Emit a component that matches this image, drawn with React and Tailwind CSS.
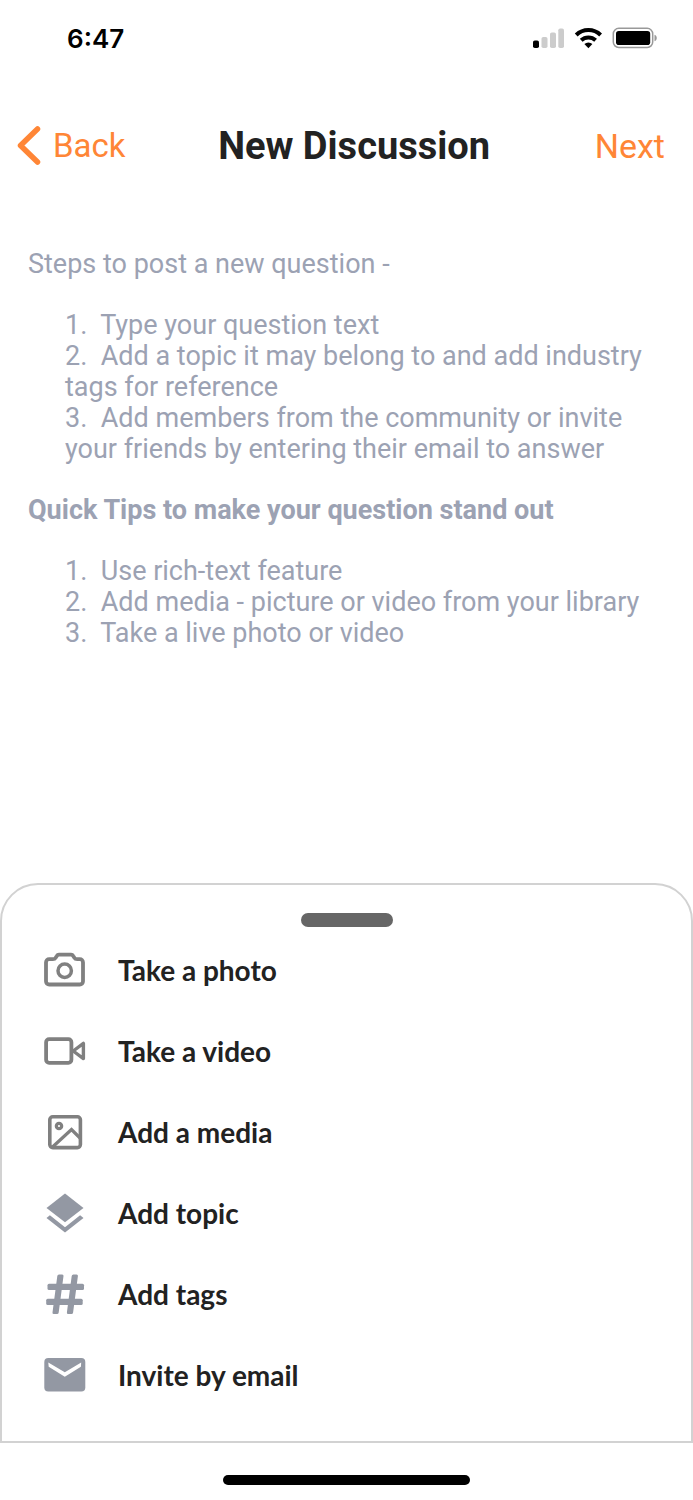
const steps = [
  'Type your question text',
  'Add a topic it may belong to and add industry tags for reference',
  'Add members from the community or invite your friends by entering their email to answer',
]

const tips = [
  'Use rich-text feature',
  'Add media - picture or video from your library',
  'Take a live photo or video',
]

const actions = [
  { label: 'Take a photo', Icon: CameraIcon },
  { label: 'Take a video', Icon: VideoIcon },
  { label: 'Add a media', Icon: MediaIcon },
  { label: 'Add topic', Icon: TopicIcon },
  { label: 'Add tags', Icon: TagsIcon },
  { label: 'Invite by email', Icon: MailIcon },
]

function CameraIcon() {
  return (
    <svg width="42" height="42" viewBox="0 0 42 42" fill="none" stroke="#808080" strokeWidth="3.8" strokeLinejoin="round" aria-hidden="true">
      <path d="M5.200 10.200h3.600c1.600 0 2.300-.4 3-1.600l1-1.600c.5-.9 1.100-1.300 2.100-1.300h12.200c1 0 1.600.4 2.100 1.300l1 1.600c.7 1.200 1.400 1.600 3 1.600h2.600a3.200 3.200 0 0 1 3.200 3.200v18.900a3.200 3.200 0 0 1-3.200 3.200H5.200a3.200 3.200 0 0 1-3.200-3.200V13.400a3.200 3.200 0 0 1 3.200-3.200z" />
      <circle cx="20.700" cy="21.700" r="6.700" strokeWidth="3.500" />
    </svg>
  )
}

function VideoIcon() {
  return (
    <svg width="42" height="42" viewBox="0 0 42 42" fill="none" stroke="#808080" strokeWidth="3.8" strokeLinejoin="round" aria-hidden="true">
      <rect x="2.100" y="9.200" width="25.300" height="23.600" rx="3" />
      <path d="M29.200 21L39.400 13.400v15.200z" strokeWidth="3.400" />
    </svg>
  )
}

function MediaIcon() {
  return (
    <svg width="42" height="42" viewBox="0 0 42 42" fill="none" stroke="#808080" strokeWidth="3.6" strokeLinejoin="round" aria-hidden="true">
      <rect x="5.800" y="5.800" width="30.600" height="30.800" rx="3" />
      <circle cx="15" cy="15" r="2.700" strokeWidth="3.200" />
      <path d="M8.500 36l19-17.500 9 9" strokeWidth="3.200" strokeLinejoin="miter" />
    </svg>
  )
}

function TopicIcon() {
  return (
    <svg width="42" height="42" viewBox="0 0 42 42" fill="#9398a3" aria-hidden="true">
      <path d="M21 1.500L39.500 16 21 30.200 2.500 16z" />
      <path d="M2.500 26l3.400-2.700L21 35.200l15.100-11.900 3.400 2.700L21 40.600z" />
    </svg>
  )
}

function TagsIcon() {
  return (
    <svg width="42" height="42" viewBox="0 0 42 42" fill="#9398a3" aria-hidden="true">
      <g transform="translate(5.400 0) skewX(-7.500)">
        <rect x="8.300" y="1.500" width="6.200" height="39.500" rx="1.500" />
        <rect x="22.700" y="1.500" width="6.200" height="39.500" rx="1.500" />
      </g>
      <rect x="3.500" y="10.700" width="36.500" height="6.200" rx="1.500" />
      <rect x="2.200" y="25.800" width="36.500" height="6.200" rx="1.500" />
    </svg>
  )
}

function MailIcon() {
  return (
    <svg width="42" height="42" viewBox="0 0 42 42" aria-hidden="true">
      <rect x="0.300" y="4" width="41" height="33.500" rx="4" fill="#9398a3" />
      <path d="M4.300 8.500L20.800 18.300 37.200 8.500l-.3 4.300L20.800 22.700 4.700 12.800z" fill="#fff" />
    </svg>
  )
}

function StatusBar() {
  return (
    <div className="flex h-19 items-center justify-between pr-9 pl-[67px]">
      <span className="font-[Inter,sans-serif] text-[26px] font-semibold text-black">6:47</span>
      <div className="flex items-center gap-[10px]">
        {/* Signal */}
        <svg width="32" height="22" viewBox="0 0 32 22" aria-hidden="true">
          <rect x="1" y="13.500" width="6" height="7.500" rx="1.800" fill="#000" />
          <rect x="9.500" y="10" width="6" height="11" rx="1.800" fill="#ccc" />
          <rect x="18" y="5.500" width="6" height="15.500" rx="1.800" fill="#ccc" />
          <rect x="26.300" y="1.500" width="5.700" height="19.500" rx="1.800" fill="#ccc" />
        </svg>
        {/* Wifi */}
        <svg width="28" height="22" viewBox="0 0 28 22" fill="none" stroke="#000" strokeWidth="4" aria-hidden="true">
          <path d="M2.200 8a17.500 17.500 0 0 1 24.400 0" />
          <path d="M7.200 13.300a10.500 10.500 0 0 1 14.400 0" />
          <path d="M14.400 21.200l-4-4.200a5.800 5.800 0 0 1 8 0z" fill="#000" stroke="none" />
        </svg>
        {/* Battery */}
        <svg width="45" height="22" viewBox="0 0 45 22" aria-hidden="true">
          <rect x="1.300" y="1.300" width="39.400" height="19.200" rx="5.500" fill="none" stroke="#999" strokeWidth="1.500" />
          <rect x="4" y="4" width="34.200" height="14" rx="2.800" fill="#000" />
          <path d="M42.500 7.800c3 1 3 5.400 0 6.400z" fill="#999" />
        </svg>
      </div>
    </div>
  )
}

function NumberedList({ items }) {
  return (
    <ol className="mt-[30px] pl-[37px]">
      {items.map((item, i) => (
        <li key={item}>{`${i + 1}.\u00a0 ${item}`}</li>
      ))}
    </ol>
  )
}

export default function App() {
  return (
    <div className="flex min-h-screen flex-col bg-white font-[Roboto,sans-serif]">
      <StatusBar />

      <header className="mt-10 flex items-center justify-between pr-7 pl-4 leading-[60px]">
        <button className="flex items-center gap-3 text-[33px] text-[#ff8636]">
          <svg width="25" height="40" viewBox="0 0 25 40" fill="none" stroke="currentColor" strokeWidth="5.500" strokeLinecap="round" strokeLinejoin="round" aria-hidden="true">
            <path d="M21.500 3L4.500 19.500l17 16.500" />
          </svg>
          Back
        </button>
        <h1 className="mr-3 text-[38px] font-bold text-[#222]">New Discussion</h1>
        <button className="text-[34px] text-[#ff8636]">Next</button>
      </header>

      <main className="mt-[73px] px-7 text-[27px] leading-[31px] text-[#9ca2b3]">
        <p>Steps to post a new question -</p>
        <NumberedList items={steps} />
        <h2 className="mt-[30px] font-bold">Quick Tips to make your question stand out</h2>
        <NumberedList items={tips} />
      </main>

      {/* Bottom sheet */}
      <section className="mt-auto rounded-t-[38px] border-2 border-[#d2d2d2] pt-7 pb-[26px]">
        <div className="mx-auto h-[14px] w-[92px] rounded-full bg-[#666]" />
        <ul className="mt-[2px]">
          {actions.map(({ label, Icon }) => (
            <li key={label}>
              <button className="flex h-[81px] w-full items-center gap-8 pl-[42px] text-left font-[Lato,sans-serif] text-[28px] font-bold text-[#222]">
                <Icon />
                {label}
              </button>
            </li>
          ))}
        </ul>
      </section>

      {/* Home indicator */}
      <div className="flex h-[57px] justify-center pt-8">
        <div className="h-[10px] w-[247px] rounded-full bg-black" />
      </div>
    </div>
  )
}
